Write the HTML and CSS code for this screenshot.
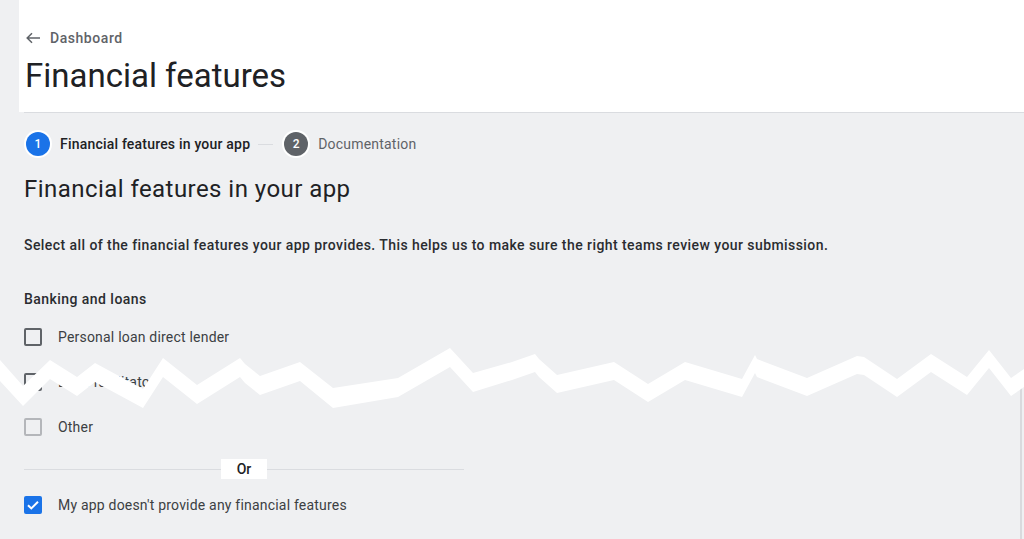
FILE: index.html
```html
<!DOCTYPE html>
<html lang="en">
<head>
<meta charset="utf-8">
<title>Financial features</title>
<link rel="stylesheet" href="styles.css">
</head>
<body>
<div class="app">
  <aside class="rail"></aside>
  <main class="main">
    <header class="page-header">
      <a class="back" href="#">
        <svg class="back-icon" width="14" height="12" viewBox="0 0 14 12" aria-hidden="true">
          <path d="M14 6H1.2M6 1.2L1.2 6L6 10.8" fill="none" stroke="#5f6368" stroke-width="1.5"/>
        </svg>
        <span>Dashboard</span>
      </a>
      <h1 class="title">Financial features</h1>
    </header>
    <section class="content">
      <ol class="stepper">
        <li class="step step-active"><span class="step-num">1</span><span class="step-label">Financial features in your app</span></li>
        <li class="step-line" aria-hidden="true"></li>
        <li class="step"><span class="step-num">2</span><span class="step-label">Documentation</span></li>
      </ol>
      <h2 class="section-title">Financial features in your app</h2>
      <p class="intro">Select all of the financial features your app provides. This helps us to make sure the right teams review your submission.</p>
      <h3 class="group-title">Banking and loans</h3>
      <ul class="options">
        <li class="option"><span class="box"></span><span class="opt-label">Personal loan direct lender</span></li>
        <li class="option"><span class="box"></span><span class="opt-label">Loan facilitator</span></li>
        <li class="option"><span class="box box-light"></span><span class="opt-label">Other</span></li>
      </ul>
      <div class="divider"><span class="divider-text">Or</span></div>
      <div class="option option-none">
        <span class="box box-checked">
          <svg width="18" height="18" viewBox="0 0 18 18" aria-hidden="true"><path d="M4 9.2l3.3 3.2L14 5.8" fill="none" stroke="#fff" stroke-width="2"/></svg>
        </span>
        <span class="opt-label">My app doesn't provide any financial features</span>
      </div>
    </section>
  </main>
</div>
<svg class="tear" width="1024" height="539" viewBox="0 0 1024 539" aria-hidden="true">
  <rect x="1020" y="380" width="2" height="159" fill="#d9dadd"/>
  <polygon fill="#ffffff" points="0,360 23,386 50,360 77,377 95,363 143,389 163,358 197,385 240,358 245,364 260,376 300,362 333,388 398,378 450,348 473,373 512,362 535,354 539,359 557,375 614,362 648,384 685,362 742,379 755,355 757,359 807,378 857,356 864,357 897,379 931,354 967,377 989,350 1011,378 1024,369 1024,387 1011,396 989,368 967,395 931,372 897,397 864,375 857,374 807,396 757,377 755,373 742,397 685,380 648,402 614,380 557,393 539,377 535,372 512,380 473,392 450,367 398,397 333,408 300,381 260,395 245,383 240,377 197,404 163,377 143,408 95,382 77,396 50,379 23,406 0,381"/>
</svg>
</body>
</html>
```

FILE: styles.css
```css
* { box-sizing: border-box; }
html, body {
  margin: 0;
  padding: 0;
  background: #eff0f2;
  font-family: Roboto, "Liberation Sans", sans-serif;
  color: #202124;
  height: 100%;
  overflow: hidden;
}
.app {
  display: flex;
  min-height: 539px;
}
.rail {
  width: 19px;
  flex: none;
  background: #eff0f2;
}
.main {
  flex: 1;
  display: flex;
  flex-direction: column;
}
.page-header {
  background: #ffffff;
  height: 112px;
  padding: 29px 0 0 7px;
}
.back {
  display: flex;
  align-items: center;
  gap: 10px;
  color: #5f6368;
  text-decoration: none;
  font-size: 14px;
  font-weight: 500;
  line-height: 18px;
  letter-spacing: 0.55px;
}
.back-icon { display: block; }
.title {
  margin: 9px 0 0 -1px;
  font-size: 33px;
  font-weight: 400;
  line-height: 40px;
  color: #202124;
  letter-spacing: 0;
}
.content {
  margin-left: 5px;
  border-top: 1px solid #dadce0;
  padding-top: 17px;
}
.stepper {
  list-style: none;
  margin: 0;
  padding: 0;
  display: flex;
  align-items: center;
  height: 28px;
}
.step {
  display: flex;
  align-items: center;
  gap: 10px;
  color: #5f6368;
  font-size: 14px;
  line-height: 20px;
  letter-spacing: 0.2px;
}
.step-num {
  width: 24px;
  height: 24px;
  border-radius: 50%;
  background: #5f6368;
  color: #fff;
  font-size: 12px;
  font-weight: 500;
  letter-spacing: 0;
  display: flex;
  align-items: center;
  justify-content: center;
  box-shadow: 0 0 0 2px #fff;
  margin-left: 2px;
}
.step-active .step-num { background: #1a73e8; }
.step-active .step-label { color: #202124; font-weight: 500; letter-spacing: 0.2px; }
.step-line {
  width: 15px;
  height: 1px;
  background: #dadce0;
  margin: 0 9px 0 8px;
}
.section-title {
  margin: 15px 0 0;
  font-size: 24px;
  font-weight: 400;
  line-height: 32px;
  letter-spacing: 0.45px;
  color: #202124;
}
.intro {
  margin: 30px 0 0;
  font-size: 14px;
  font-weight: 500;
  line-height: 20px;
  color: #2a2c30;
  letter-spacing: 0.43px;
}
.group-title {
  margin: 34px 0 0;
  font-size: 14px;
  font-weight: 500;
  line-height: 20px;
  color: #2a2c30;
  letter-spacing: 0.45px;
}
.options {
  list-style: none;
  margin: 5px 0 0;
  padding: 0;
}
.option {
  display: flex;
  align-items: center;
  gap: 16px;
  height: 45px;
}
.box {
  width: 18px;
  height: 18px;
  flex: none;
  border: 2px solid #5f6368;
  border-radius: 2px;
  display: block;
}
.box-light { border-color: #b4b6ba; }
.box-checked {
  border: none;
  background: #1a73e8;
}
.box-checked svg { display: block; }
.opt-label {
  font-size: 14px;
  line-height: 20px;
  color: #3c4043;
  letter-spacing: 0.2px;
}
.divider {
  width: 440px;
  height: 20px;
  margin-top: 10px;
  display: flex;
  align-items: center;
  justify-content: center;
  background: linear-gradient(#dadce0, #dadce0) 0 50% / 100% 1px no-repeat;
}
.divider-text {
  background: #fff;
  width: 46px;
  height: 20px;
  display: flex;
  align-items: center;
  justify-content: center;
  font-size: 14px;
  font-weight: 500;
  color: #202124;
}
.option-none { margin-top: 3px; }
.tear {
  position: absolute;
  left: 0;
  top: 0;
  pointer-events: none;
}
```
